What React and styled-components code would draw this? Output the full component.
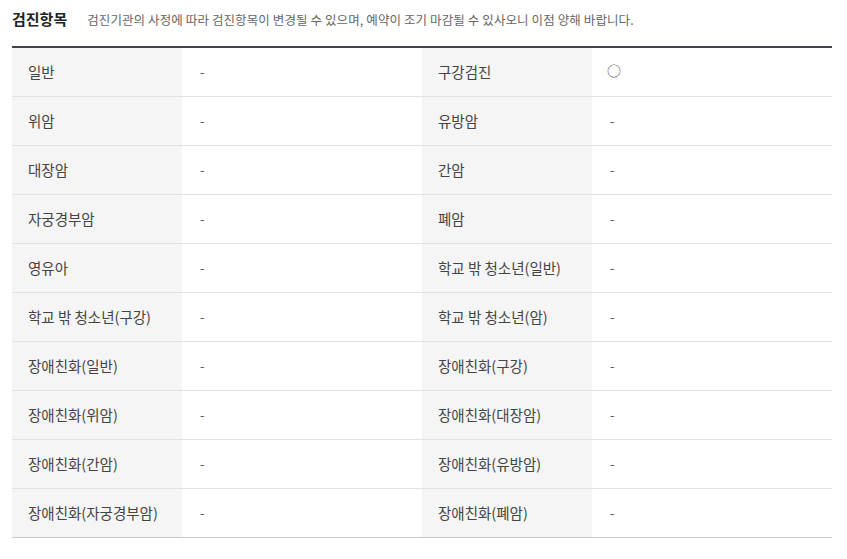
import React from "react";
import styled, { createGlobalStyle } from "styled-components";

const Global = createGlobalStyle`
  html, body { margin: 0; padding: 0; background: #fff; }
  body { font-family: "Noto Sans CJK KR", "Noto Sans", sans-serif; color: #333; }
`;

const Wrap = styled.section`
  padding: 8px 15px 0 12px;
`;

const Header = styled.div`
  display: flex;
  align-items: baseline;
  gap: 20px;
  height: 38px;
`;

const Title = styled.h2`
  margin: 0;
  font-size: 15px;
  font-weight: 700;
  color: #222;
  line-height: 22px;
`;

const Desc = styled.p`
  margin: 0;
  font-size: 12.5px;
  color: #666;
  line-height: 18px;
  letter-spacing: 0.1px;
`;

const Table = styled.div`
  border-top: 2px solid #42434e;
  border-bottom: 1px solid #c8c8c8;
`;

const Row = styled.div`
  display: grid;
  grid-template-columns: 170px 240px 170px 240px;
  height: 48px;
  & + & { border-top: 1px solid #e2e2e2; }
`;

const Th = styled.div`
  background: #f5f5f5;
  display: flex;
  align-items: center;
  padding-left: 16px;
  padding-bottom: 2px;
  font-size: 14.5px;
  color: #444;
`;

const Td = styled.div`
  display: flex;
  align-items: center;
  padding-left: 18px;
  padding-bottom: 2px;
  font-size: 14px;
  color: #444;
`;

const Mark = styled.span`
  font-size: ${(p) => (p.$circle ? "14px" : "13px")};
  margin-left: ${(p) => (p.$circle ? "-3px" : "0")};
  margin-bottom: ${(p) => (p.$circle ? "2px" : "0")};
  color: #555;
`;

const rows = [
  ["일반", "-", "구강검진", "○"],
  ["위암", "-", "유방암", "-"],
  ["대장암", "-", "간암", "-"],
  ["자궁경부암", "-", "폐암", "-"],
  ["영유아", "-", "학교 밖 청소년(일반)", "-"],
  ["학교 밖 청소년(구강)", "-", "학교 밖 청소년(암)", "-"],
  ["장애친화(일반)", "-", "장애친화(구강)", "-"],
  ["장애친화(위암)", "-", "장애친화(대장암)", "-"],
  ["장애친화(간암)", "-", "장애친화(유방암)", "-"],
  ["장애친화(자궁경부암)", "-", "장애친화(폐암)", "-"],
];

export default function App() {
  return (
    <>
      <Global />
      <Wrap>
        <Header>
          <Title>검진항목</Title>
          <Desc>검진기관의 사정에 따라 검진항목이 변경될 수 있으며, 예약이 조기 마감될 수 있사오니 이점 양해 바랍니다.</Desc>
        </Header>
        <Table>
          {rows.map((r, i) => (
            <Row key={i}>
              <Th>{r[0]}</Th>
              <Td><Mark $circle={r[1] === "○"}>{r[1]}</Mark></Td>
              <Th>{r[2]}</Th>
              <Td><Mark $circle={r[3] === "○"}>{r[3]}</Mark></Td>
            </Row>
          ))}
        </Table>
      </Wrap>
    </>
  );
}
